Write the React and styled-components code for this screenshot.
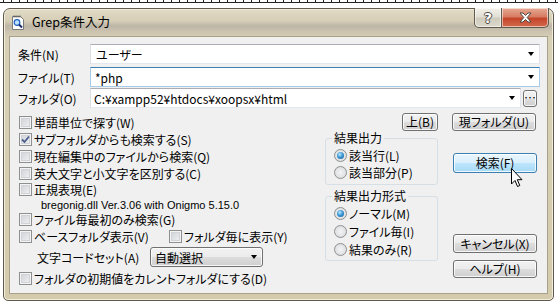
import styled, { createGlobalStyle } from "styled-components";

const Global = createGlobalStyle`
  html, body {
    margin: 0;
    padding: 0;
    background: #fff;
  }
  body {
    width: 558px;
    height: 304px;
    overflow: hidden;
    font-family: "Noto Sans CJK JP", "Noto Sans", sans-serif;
    font-size: 12px;
    font-feature-settings: "palt";
    color: #000;
  }
  * { box-sizing: border-box; }
`;

const Ruler = styled.div`
  height: 8px;
  background:
    linear-gradient(#222, #222) 0 2px / 100% 1px no-repeat,
    repeating-linear-gradient(90deg, #222 0 1px, transparent 1px 8px) 3px 0 / 100% 2px no-repeat;
`;

const Window = styled.div`
  margin-left: 3px;
  width: 551px;
  height: 293px;
  border: 1px solid #5f5a4c;
  border-radius: 7px 7px 5px 5px;
  background: linear-gradient(180deg, #e1dbc6 0px, #d6ceb6 12px, #bdb5a7 17px, #cdc5b0 23px, #d8d0b6 30px, #d4cbad 100%);
  box-shadow: inset 0 0 0 1px #f1ecdb;
  display: flex;
  flex-direction: column;
`;

const TitleBar = styled.div`
  height: 27px;
  display: flex;
  align-items: flex-start;
  padding-left: 8px;
`;

const TitleIcon = styled.svg`
  margin-top: 6px;
  flex: none;
`;

const TitleText = styled.span`
  margin: 4px 0 0 8px;
  font-size: 12.5px;
  line-height: 17px;
  font-feature-settings: normal;
  color: #000;
`;

const Caption = styled.div`
  margin-left: auto;
  margin-right: 4px;
  display: flex;
  margin-top: -1px;
`;

const CaptionButton = styled.div`
  width: ${(p) => p.$w}px;
  height: 20px;
  border: 1px solid #5f5a4c;
  border-top: none;
  border-left-width: ${(p) => (p.$close ? 0 : 1)}px;
  border-radius: ${(p) => (p.$close ? "0 0 5px 0" : "0 0 0 5px")};
  background: ${(p) =>
    p.$close
      ? "linear-gradient(180deg, #e6a994 0%, #d77d63 45%, #c5442a 55%, #d26a4c 100%)"
      : "linear-gradient(180deg, #f3f1ea 0%, #e2dfd5 45%, #cfcbbd 55%, #dcd8cb 100%)"};
  box-shadow: inset 0 0 0 1px rgba(255, 255, 255, 0.55);
  display: flex;
  align-items: center;
  justify-content: center;
  font: bold 14px "DejaVu Sans", sans-serif;
  color: #fff;
  text-shadow: 1px 0 #4d4a44, -1px 0 #4d4a44, 0 1px #4d4a44, 0 -1px #4d4a44;
`;

const Client = styled.div`
  margin-left: 5px;
  width: 539px;
  flex: 1;
  margin-bottom: 6px;
  border: 1px solid #a9a18a;
  background: #f0f0f0;
  padding: 7px 7px 0 8px;
  line-height: 17px;
`;

const FieldRow = styled.div`
  display: flex;
  align-items: center;
  height: 20px;
  margin-top: ${(p) => p.$mt || 0}px;
`;

const FieldLabel = styled.span`
  width: 72px;
  flex: none;
`;

const Combo = styled.div`
  flex: ${(p) => (p.$w ? "none" : 1)};
  width: ${(p) => (p.$w ? p.$w + "px" : "auto")};
  height: 20px;
  display: flex;
  align-items: center;
  padding-left: ${(p) => p.$pl || 5}px;
  background: #fff;
  border: 1px solid;
  border-color: ${(p) =>
    p.$focus ? "#3c7fb1 #a7cbe8 #a7cbe8 #a7cbe8" : "#abadb3 #e2e3ea #e3e9ef #dbdfe6"};
`;

const ComboText = styled.span`
  flex: 1;
  white-space: nowrap;
`;

const Arrow = styled.span`
  width: 0;
  height: 0;
  border-left: 3.5px solid transparent;
  border-right: 3.5px solid transparent;
  border-top: 4px solid #000;
  margin-right: 5px;
  flex: none;
`;

const Button = styled.div`
  width: ${(p) => p.$w}px;
  height: ${(p) => p.$h || 18}px;
  margin-top: ${(p) => p.$mt || 0}px;
  flex: none;
  position: relative;
  border: 1px solid ${(p) => (p.$hot ? "#3c7fb1" : "#707070")};
  border-radius: 3px;
  background: ${(p) =>
    p.$hot
      ? "linear-gradient(180deg, #eaf6fd 0%, #d9f0fc 50%, #bee6fd 50%, #a7d9f5 100%)"
      : "linear-gradient(180deg, #f2f2f2 0%, #ebebeb 50%, #dddddd 50%, #cfcfcf 100%)"};
  box-shadow: inset 0 0 0 1px rgba(255, 255, 255, 0.8);
  display: flex;
  align-items: center;
  justify-content: center;
  white-space: nowrap;
  line-height: 14px;
`;

const Lower = styled.div`
  display: flex;
  margin-top: 6px;
`;

const LeftCol = styled.div`
  width: 307px;
  flex: none;
  padding-left: 1px;
`;

const CheckRow = styled.div`
  display: flex;
  align-items: center;
  height: ${(p) => p.$h || 17}px;
  margin-top: ${(p) => p.$mt || 0}px;
  line-height: 13px;
`;

const CheckItem = styled.label`
  display: flex;
  align-items: center;
  gap: 2px;
  width: ${(p) => (p.$w ? p.$w + "px" : "auto")};
  white-space: nowrap;
`;

const Box = styled.span`
  width: 13px;
  height: 13px;
  flex: none;
  border: 1px solid #8e8f8f;
  background: linear-gradient(135deg, #cbcfd5 0%, #f4f4f4 100%);
  box-shadow: inset 0 0 0 1px #f4f4f4, inset 0 0 0 2px #d0d3d8;
  display: flex;
  align-items: center;
  justify-content: center;
`;

const Note = styled.div`
  height: 15px;
  display: flex;
  align-items: center;
  padding-left: 22px;
  font-family: "Liberation Sans", Arial, sans-serif;
  font-size: 11px;
  line-height: 12px;
  white-space: nowrap;
`;

const CodeLabel = styled.span`
  margin-left: 18px;
  width: 113px;
  flex: none;
`;

const DropButton = styled(Button)`
  justify-content: space-between;
  padding-left: 4px;
  line-height: 17px;
`;

const RightCol = styled.div`
  width: 211px;
  flex: none;
`;

const TopButtons = styled.div`
  display: flex;
  justify-content: flex-end;
  gap: 14px;
  margin-top: -1px;
`;

const Panels = styled.div`
  display: flex;
  gap: 15px;
`;

const Groups = styled.div`
  width: 113px;
  flex: none;
`;

const Group = styled.fieldset`
  margin: ${(p) => p.$mt || 0}px 0 0 0;
  padding: ${(p) => p.$pt}px 0 ${(p) => p.$pb}px 8px;
  border: 1px solid #d5dfe5;
  border-radius: 3px;
  min-width: 0;
`;

const Legend = styled.legend`
  padding: 0 2px;
  margin-left: -2px;
  line-height: 12px;
`;

const RadioRow = styled.label`
  display: flex;
  align-items: center;
  gap: 2px;
  height: ${(p) => p.$h}px;
  white-space: nowrap;
`;

const Radio = styled.span`
  width: 13px;
  height: 13px;
  flex: none;
  border-radius: 50%;
  border: 1px solid #8e8f8f;
  background: radial-gradient(circle at 50% 50%, #f4f4f4 0%, #d6d8db 100%);
  display: flex;
  align-items: center;
  justify-content: center;

  &::after {
    content: "";
    display: ${(p) => (p.$on ? "block" : "none")};
    width: 7px;
    height: 7px;
    border-radius: 50%;
    background: radial-gradient(circle at 40% 35%, #bfe9ff 0%, #3d9ad6 45%, #10568f 100%);
  }
`;

const ButtonCol = styled.div`
  width: 84px;
  flex: none;
  display: flex;
  flex-direction: column;
`;

const Cursor = styled.svg`
  position: absolute;
  left: 57px;
  top: 14px;
`;

const Check = ({ on, w, children }) => (
  <CheckItem $w={w}>
    <Box>
      {on && (
        <svg width="9" height="9" viewBox="0 0 9 9">
          <path d="M1 4.5 L3.5 7 L8 1.5" fill="none" stroke="#4a5e8c" strokeWidth="1.8" />
        </svg>
      )}
    </Box>
    {children}
  </CheckItem>
);

const RadioItem = ({ on, h, children }) => (
  <RadioRow $h={h}>
    <Radio $on={on} />
    {children}
  </RadioRow>
);

export default function App() {
  return (
    <>
      <Global />
      <Ruler />
      <Window>
        <TitleBar>
          <TitleIcon width="12" height="15" viewBox="0 0 12 15">
            <path d="M0.5 1.5 H8.5 L11.5 4.5 V14.5 H0.5 Z" fill="#fff" stroke="#7a7a7a" />
            <path d="M2 0.5 V2.5 M4 0.5 V2.5 M6 0.5 V2.5 M8 0.5 V2.5" stroke="#555" />
            <circle cx="5" cy="7.5" r="2.8" fill="#bfe3ff" stroke="#1d5fbf" strokeWidth="1.2" />
            <path d="M7 9.5 L10 12.5" stroke="#1a2f6a" strokeWidth="2" />
          </TitleIcon>
          <TitleText>Grep条件入力</TitleText>
          <Caption>
            <CaptionButton $w={28}>?</CaptionButton>
            <CaptionButton $w={47} $close>
              <svg width="13" height="11" viewBox="0 0 13 11">
                <path
                  d="M1 1 L4 1 L6.5 3.5 L9 1 L12 1 L8.2 5.5 L12 10 L9 10 L6.5 7.5 L4 10 L1 10 L4.8 5.5 Z"
                  fill="#fff"
                  stroke="#4d4a44"
                  strokeWidth="1"
                />
              </svg>
            </CaptionButton>
          </Caption>
        </TitleBar>
        <Client>
          <FieldRow>
            <FieldLabel>条件(N)</FieldLabel>
            <Combo>
              <ComboText>ユーザー</ComboText>
              <Arrow />
            </Combo>
          </FieldRow>
          <FieldRow $mt={3}>
            <FieldLabel>ファイル(T)</FieldLabel>
            <Combo $focus $pl={4}>
              <ComboText>*php</ComboText>
              <Arrow />
            </Combo>
          </FieldRow>
          <FieldRow $mt={1}>
            <FieldLabel>フォルダ(O)</FieldLabel>
            <Combo $w={431} $pl={3}>
              <ComboText>C:¥xampp52¥htdocs¥xoopsx¥html</ComboText>
              <Arrow />
            </Combo>
            <Button $w={14} $h={17} style={{ marginLeft: 2 }}>
              …
            </Button>
          </FieldRow>
          <Lower>
            <LeftCol>
              <CheckRow>
                <Check>単語単位で探す(W)</Check>
              </CheckRow>
              <CheckRow>
                <Check on>サブフォルダからも検索する(S)</Check>
              </CheckRow>
              <CheckRow>
                <Check>現在編集中のファイルから検索(Q)</Check>
              </CheckRow>
              <CheckRow>
                <Check>英大文字と小文字を区別する(C)</Check>
              </CheckRow>
              <CheckRow $h={15}>
                <Check>正規表現(E)</Check>
              </CheckRow>
              <Note>bregonig.dll Ver.3.06 with Onigmo 5.15.0</Note>
              <CheckRow $h={15}>
                <Check>ファイル毎最初のみ検索(G)</Check>
              </CheckRow>
              <CheckRow $mt={1}>
                <Check w={150}>ベースフォルダ表示(V)</Check>
                <Check>フォルダ毎に表示(Y)</Check>
              </CheckRow>
              <CheckRow $h={20} $mt={2}>
                <CodeLabel>文字コードセット(A)</CodeLabel>
                <DropButton $w={113} $h={20}>
                  自動選択
                  <Arrow />
                </DropButton>
              </CheckRow>
              <CheckRow $mt={3}>
                <Check>フォルダの初期値をカレントフォルダにする(D)</Check>
              </CheckRow>
            </LeftCol>
            <RightCol>
              <TopButtons>
                <Button $w={36}>上(B)</Button>
                <Button $w={84}>現フォルダ(U)</Button>
              </TopButtons>
              <Panels>
                <Groups>
                  <Group $mt={1} $pt={3} $pb={3}>
                    <Legend>結果出力</Legend>
                    <RadioItem on h={17}>該当行(L)</RadioItem>
                    <RadioItem h={17}>該当部分(P)</RadioItem>
                  </Group>
                  <Group $mt={5} $pt={2} $pb={2}>
                    <Legend>結果出力形式</Legend>
                    <RadioItem on h={18}>ノーマル(M)</RadioItem>
                    <RadioItem h={18}>ファイル毎(I)</RadioItem>
                    <RadioItem h={18}>結果のみ(R)</RadioItem>
                  </Group>
                </Groups>
                <ButtonCol>
                  <Button $w={84} $h={20} $mt={22} $hot>
                    検索(F)
                    <Cursor width="12" height="20" viewBox="0 0 12 20">
                      <path
                        d="M0.5 0.5 V16 L4 12.5 L6.5 18.5 L8.8 17.5 L6.3 11.7 L11 11.7 Z"
                        fill="#fff"
                        stroke="#000"
                        strokeWidth="1"
                        strokeLinejoin="round"
                      />
                    </Cursor>
                  </Button>
                  <Button $w={84} $h={19} $mt={61}>キャンセル(X)</Button>
                  <Button $w={84} $mt={7}>ヘルプ(H)</Button>
                </ButtonCol>
              </Panels>
            </RightCol>
          </Lower>
        </Client>
      </Window>
    </>
  );
}
